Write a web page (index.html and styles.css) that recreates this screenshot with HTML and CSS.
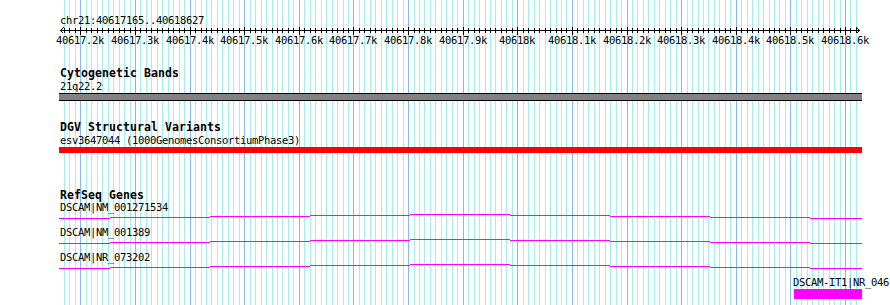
FILE: index.html
```html
<!DOCTYPE html>
<html>
<head>
<meta charset="utf-8">
<title>Genome browser - chr21</title>
<link rel="stylesheet" href="styles.css">
</head>
<body>
<div class="panel">
  <svg class="grid" id="grid" width="890" height="305" shape-rendering="crispEdges"></svg>
  <div class="content">
    <div class="coords">chr21:40617165..40618627</div>
    <svg class="ruler" id="ruler" width="890" height="20" shape-rendering="crispEdges"></svg>

    <section class="track track-cyto">
      <h2 class="track-title">Cytogenetic Bands</h2>
      <div class="feature-label">21q22.2</div>
      <div class="band"></div>
    </section>

    <section class="track track-dgv">
      <h2 class="track-title">DGV Structural Variants</h2>
      <div class="feature-label">esv3647044 (1000GenomesConsortiumPhase3)</div>
      <div class="variant"></div>
    </section>

    <section class="track track-refseq">
      <h2 class="track-title">RefSeq Genes</h2>
      <div class="gene-row">
        <div class="feature-label">DSCAM|NM_001271534</div>
        <svg class="hat" width="890" height="10" shape-rendering="crispEdges"><path d="M59 4.5H110M110 3.5H210M210 2.5H310M310 1.5H410M410 0.5H510M510 1.5H610M610 2.5H710M710 3.5H810M810 4.5H862"/></svg>
      </div>
      <div class="gene-row">
        <div class="feature-label">DSCAM|NM_001389</div>
        <svg class="hat" width="890" height="10" shape-rendering="crispEdges"><path d="M59 4.5H110M110 3.5H210M210 2.5H310M310 1.5H410M410 0.5H510M510 1.5H610M610 2.5H710M710 3.5H810M810 4.5H862"/></svg>
      </div>
      <div class="gene-row">
        <div class="feature-label">DSCAM|NR_073202</div>
        <svg class="hat" width="890" height="10" shape-rendering="crispEdges"><path d="M59 4.5H110M110 3.5H210M210 2.5H310M310 1.5H410M410 0.5H510M510 1.5H610M610 2.5H710M710 3.5H810M810 4.5H862"/></svg>
      </div>
      <div class="gene-row">
        <div class="feature-label" style="margin-left:793px">DSCAM-IT1|NR_046</div>
        <div class="exon" style="margin-left:794px;width:68px"></div>
      </div>
    </section>
  </div>
</div>
<script src="script.js"></script>
</body>
</html>
```

FILE: styles.css
```css
html, body {
  margin: 0;
  padding: 0;
  background: #ffffff;
}

.panel {
  position: relative;
  width: 890px;
  height: 305px;
  overflow: hidden;
  background: #ffffff;
  font-family: "DejaVu Sans Mono", "Liberation Mono", monospace;
  color: #000000;
}

.grid {
  position: absolute;
  left: 0;
  top: 0;
}

.grid .minor {
  stroke: #a4eeee;
  stroke-width: 1;
  fill: none;
}

.grid .major {
  stroke: #84bbe8;
  stroke-width: 1;
  fill: none;
}

.content {
  position: relative;
  padding-top: 15px;
}

.coords {
  margin-left: 60px;
  font-size: 10.5px;
  letter-spacing: -0.32px;
  line-height: 11px;
  height: 12px;
  white-space: nowrap;
}

.ruler {
  display: block;
}

.ruler .axis {
  stroke: #000000;
  stroke-width: 1;
  fill: none;
}

.ruler text {
  font-family: "DejaVu Sans Mono", "Liberation Mono", monospace;
  font-size: 10.5px;
  letter-spacing: -0.32px;
  fill: #000000;
}

.track-title {
  margin: 0 0 0 60px;
  font-size: 11.5px;
  letter-spacing: 0.08px;
  font-weight: bold;
  line-height: 11.5px;
  height: 12px;
  white-space: nowrap;
}

.track-cyto {
  margin-top: 21px;
}

.track-dgv {
  margin-top: 21px;
}

.track-refseq {
  margin-top: 37px;
}

.feature-label {
  margin-left: 60px;
  font-size: 10.5px;
  letter-spacing: -0.32px;
  line-height: 11px;
  height: 12px;
  white-space: nowrap;
}

.track-cyto .feature-label,
.track-dgv .feature-label {
  margin-top: 1px;
}

.band {
  margin-left: 59px;
  width: 803px;
  height: 6px;
  background: #828282;
  border-top: 1px solid #000000;
  border-bottom: 1px solid #000000;
}

.variant {
  margin-left: 59px;
  width: 803px;
  height: 6px;
  background: #ff0000;
}

.gene-row {
  height: 25px;
}

.hat {
  display: block;
}

.hat path {
  stroke: #ff00ff;
  stroke-width: 1;
  fill: none;
}

.exon {
  height: 10px;
  background: #ff00ff;
}
```

FILE: script.js
```js
(function () {
  var START = 40617165, END = 40618627;
  var X0 = 61.3, PPB = 0.546154;
  var NS = 'http://www.w3.org/2000/svg';

  function xpos(bp) { return Math.round(X0 + (bp - START) * PPB); }

  function el(name, attrs) {
    var n = document.createElementNS(NS, name);
    for (var k in attrs) n.setAttribute(k, attrs[k]);
    return n;
  }

  // background grid: a line every 10 bp, darker every 100 bp
  var grid = document.getElementById('grid');
  var minor = '', major = '';
  var bp;
  for (bp = Math.ceil(START / 10) * 10; bp <= END; bp += 10) {
    var px = xpos(bp) + 0.5;
    var seg = 'M' + px + ' 0V305';
    if (bp % 100 === 0) major += seg; else minor += seg;
  }
  grid.appendChild(el('path', { 'class': 'minor', d: minor }));
  grid.appendChild(el('path', { 'class': 'major', d: major }));

  // ruler axis, arrows, ticks and labels
  var ruler = document.getElementById('ruler');
  var d = 'M60 3.5H860';
  d += 'M60.5 3.5L63.5 0.5M60.5 3.5L63.5 6.5';
  d += 'M859.5 3.5L856.5 0.5M859.5 3.5L856.5 6.5';
  for (bp = Math.ceil(START / 10) * 10; bp <= END; bp += 10) {
    var tx = xpos(bp) + 0.5;
    if (bp % 100 === 0) d += 'M' + tx + ' 0V8';
    else d += 'M' + tx + ' 1V6';
  }
  ruler.appendChild(el('path', { 'class': 'axis', d: d }));
  for (bp = Math.ceil(START / 100) * 100; bp <= END; bp += 100) {
    var t = el('text', { x: xpos(bp), y: 16.5, 'text-anchor': 'middle' });
    t.textContent = (bp / 1000) + 'k';
    ruler.appendChild(t);
  }
})();
```
